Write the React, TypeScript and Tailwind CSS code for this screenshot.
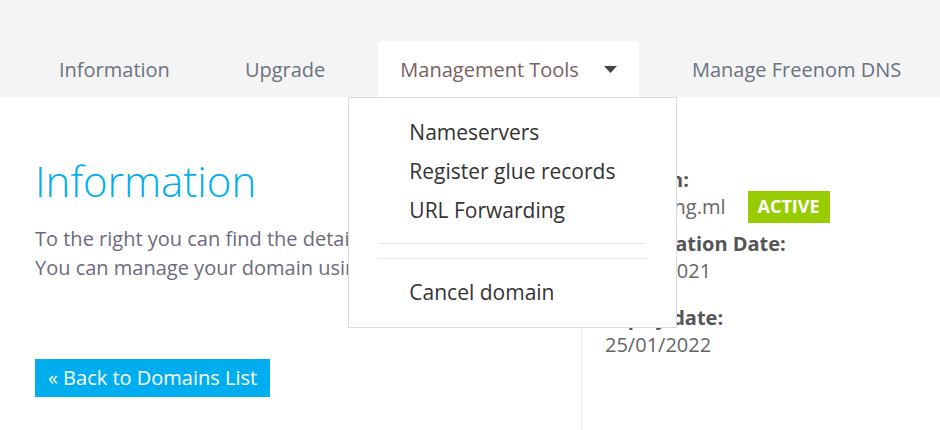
const tabs = ["Information", "Upgrade", "Management Tools", "Manage Freenom DNS"];

const menuItems = ["Nameservers", "Register glue records", "URL Forwarding"];

const ManagementMenu = () => {
  return (
    <div className="absolute left-[-30px] top-full w-[329px] bg-white border border-[#dcdcdc] z-10 pt-[15px] pb-[15px]">
      {menuItems.map((item) => (
        <div key={item} className="pl-[60px] h-[39px] leading-[39px] text-[21px] text-[#333]">
          {item}
        </div>
      ))}
      <div className="mx-[30px] mt-[13px] border-t border-[#e5e5e5]" />
      <div className="mx-[30px] mt-[14px] border-t border-[#e5e5e5]" />
      <div className="pl-[60px] mt-[14px] h-[39px] leading-[39px] text-[21px] text-[#333]">
        Cancel domain
      </div>
    </div>
  );
};

const App = () => {
  return (
    <div className="w-[940px] h-[430px] overflow-hidden bg-white font-['Open_Sans',sans-serif]">
      <div className="h-[97px] bg-[#f4f4f4] flex items-end pl-[37px] gap-[31px]">
        {tabs.map((tab) => {
          const active = tab === "Management Tools";
          return (
            <div
              key={tab}
              className={
                active
                  ? "relative h-[56px] px-[22px] flex items-center bg-white rounded-t-[5px] text-[20px] text-[#7a5f63]"
                  : "h-[56px] px-[22px] flex items-center text-[20px] text-[#6b7280]"
              }
            >
              <span className="pt-[2px]">{tab}</span>
              {active && (
                <>
                  <svg className="ml-[25px] mt-[1px]" width="13" height="7" viewBox="0 0 13 7">
                    <path d="M0 0h13L6.5 7z" fill="#444" />
                  </svg>
                  <ManagementMenu />
                </>
              )}
            </div>
          );
        })}
      </div>

      <div className="flex h-[333px]">
        <div className="w-[581px] pl-[35px]">
          <h1 className="pt-[58px] text-[42px] leading-[52px] font-light text-[#00aeef]">Information</h1>
          <p className="mt-[17px] text-[20px] leading-[29px] text-[#6b6b7d]">
            To the right you can find the details of your domain.
            <br />
            You can manage your domain using the tabs above.
          </p>
          <button className="mt-[77px] h-[38px] px-[13px] bg-[#00aeef] text-white text-[20px] leading-[38px]">
            « Back to Domains List
          </button>
        </div>
        <div className="flex-1 border-l border-[#ededed] pl-[23px] pt-[69px] text-[20px]">
          <div className="leading-[27px] font-bold text-[#555]">Domain:</div>
          <div className="h-[27px] flex items-center text-[#666]">
            <span>mytesting.ml</span>
            <span className="ml-[22px] h-[32px] px-[10px] flex items-center bg-[#99cc00] text-white font-bold text-[18px]">
              ACTIVE
            </span>
          </div>
          <div className="mt-[10px] leading-[27px] font-bold text-[#555]">Registration Date:</div>
          <div className="leading-[27px] text-[#666]">25/01/2021</div>
          <div className="mt-[20px] leading-[27px] font-bold text-[#555]">Expiry date:</div>
          <div className="leading-[27px] text-[#666]">25/01/2022</div>
        </div>
      </div>
    </div>
  );
};

export default App;
